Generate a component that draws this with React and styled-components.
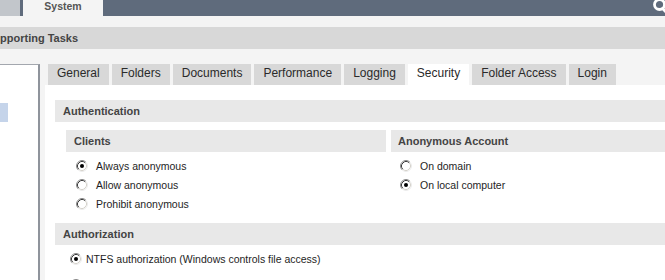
import React from "react";
import styled, { createGlobalStyle } from "styled-components";

const GlobalStyle = createGlobalStyle`
  html, body {
    margin: 0;
    padding: 0;
    background: #f4f4f4;
    overflow: hidden;
    font-family: "Liberation Sans", Arial, sans-serif;
  }
  #root {
    width: 665px;
    height: 280px;
    overflow: hidden;
  }
`;

const Page = styled.div`
  width: 665px;
  height: 280px;
  overflow: hidden;
  display: flex;
  flex-direction: column;
  background: #f4f4f4;
`;

const TopBar = styled.div`
  height: 16px;
  flex: none;
  display: flex;
  background: #5f6b7c;
  overflow: hidden;
`;

const TopStub = styled.div`
  width: 20px;
  background: #c2c6cb;
`;

const TopTab = styled.div`
  width: 80px;
  margin-left: 3px;
  background: #f4f4f4;
  color: #555;
  font-size: 10.5px;
  font-weight: bold;
  line-height: 12px;
  text-align: center;
`;

const TopIcon = styled.svg`
  margin-left: auto;
  flex: none;
  display: block;
`;

const TitleBar = styled.div`
  margin-top: 11px;
  height: 22px;
  flex: none;
  background: #d8d8d8;
  color: #444;
  font-size: 11px;
  font-weight: bold;
  line-height: 22px;
  white-space: nowrap;
  text-indent: -14px;
`;

const Body = styled.div`
  margin-top: 15px;
  flex: 1;
  display: flex;
  min-height: 0;
`;

const SidePanel = styled.div`
  width: 38px;
  flex: none;
  background: #fff;
  border-top: 1px solid #a3a7ae;
  border-right: 2px solid #8f949c;
  padding-top: 38px;
`;

const SideSelected = styled.div`
  width: 8px;
  height: 19px;
  background: #c5d4ea;
`;

const Main = styled.div`
  margin-left: 5px;
  flex: 1;
  display: flex;
  flex-direction: column;
  min-width: 0;
`;

const TabRow = styled.div`
  display: flex;
  gap: 3px;
  padding-left: 3px;
  height: 21px;
  flex: none;
`;

const Tab = styled.div`
  height: 21px;
  box-sizing: border-box;
  padding: 2px 9px 0;
  line-height: 15px;
  font-size: 12px;
  color: #2a2a2a;
  background: ${(p) => (p.$active ? "#ffffff" : "#d8d8d8")};
  white-space: nowrap;
`;

const Content = styled.div`
  flex: 1;
  background: #fff;
  padding: 15px 0 0 10px;
`;

const SectionBar = styled.div`
  height: 22px;
  background: #e8e8e8;
  color: #444;
  font-size: 11px;
  font-weight: bold;
  line-height: 22px;
  padding-left: 8px;
  margin-top: ${(p) => p.$top || 0}px;
`;

const Columns = styled.div`
  display: grid;
  grid-template-columns: 320px 1fr;
  gap: 5px;
  margin-top: 8px;
  margin-left: 11px;
`;

const SubHeader = styled.div`
  height: 22px;
  background: #e8e8e8;
  color: #444;
  font-size: 11px;
  font-weight: bold;
  line-height: 22px;
  padding-left: ${(p) => p.$pad || 8}px;
`;

const RadioList = styled.div`
  display: flex;
  flex-direction: column;
  padding-top: 5px;
  padding-left: ${(p) => p.$indent}px;
`;

const RadioRow = styled.div`
  height: ${(p) => p.$row}px;
  flex: none;
  display: flex;
  align-items: flex-start;
  gap: ${(p) => p.$gap}px;
`;

const RadioIcon = styled.svg`
  flex: none;
  margin-top: 3px;
`;

const RadioLabel = styled.span`
  font-size: 10.5px;
  color: #1e1e1e;
  line-height: 19px;
  white-space: nowrap;
`;

function Radio({ checked }) {
  return (
    <RadioIcon width="12" height="12" viewBox="0 0 12 12">
      <circle cx="6" cy="6" r="5.5" fill="#fff" />
      <path d="M2.11 9.89 A5.5 5.5 0 0 1 9.89 2.11" fill="none" stroke="#8a8a8a" strokeWidth="1" />
      <path d="M9.89 2.11 A5.5 5.5 0 0 1 2.11 9.89" fill="none" stroke="#ececec" strokeWidth="1" />
      <path d="M2.82 9.18 A4.5 4.5 0 0 1 9.18 2.82" fill="none" stroke="#3c3c3c" strokeWidth="1" />
      <path d="M9.18 2.82 A4.5 4.5 0 0 1 2.82 9.18" fill="none" stroke="#d6d3cc" strokeWidth="1" />
      {checked && <circle cx="6" cy="6" r="2" fill="#000" />}
    </RadioIcon>
  );
}

function RadioGroup({ items, indent, gap, row = 19 }) {
  return (
    <RadioList $indent={indent}>
      {items.map((it) => (
        <RadioRow key={it.label} $gap={gap} $row={row}>
          <Radio checked={it.checked} />
          <RadioLabel>{it.label}</RadioLabel>
        </RadioRow>
      ))}
    </RadioList>
  );
}

const tabs = [
  "General",
  "Folders",
  "Documents",
  "Performance",
  "Logging",
  "Security",
  "Folder Access",
  "Login",
];

export default function App() {
  return (
    <>
      <GlobalStyle />
      <Page>
        <TopBar>
          <TopStub />
          <TopTab>System</TopTab>
          <TopIcon width="15" height="16" viewBox="0 0 15 16">
            <circle cx="9.5" cy="4.5" r="5" fill="none" stroke="#fff" strokeWidth="2.8" />
            <path d="M12.5 8.5 L16 12" stroke="#fff" strokeWidth="2.8" strokeLinecap="round" />
          </TopIcon>
        </TopBar>
        <TitleBar>Supporting Tasks</TitleBar>
        <Body>
          <SidePanel>
            <SideSelected />
          </SidePanel>
          <Main>
            <TabRow>
              {tabs.map((t) => (
                <Tab key={t} $active={t === "Security"}>
                  {t}
                </Tab>
              ))}
            </TabRow>
            <Content>
              <SectionBar>Authentication</SectionBar>
              <Columns>
                <div>
                  <SubHeader $pad={8}>Clients</SubHeader>
                  <RadioGroup
                    indent={10}
                    gap={8}
                    items={[
                      { label: "Always anonymous", checked: true },
                      { label: "Allow anonymous" },
                      { label: "Prohibit anonymous" },
                    ]}
                  />
                </div>
                <div>
                  <SubHeader $pad={7}>Anonymous Account</SubHeader>
                  <RadioGroup
                    indent={9}
                    gap={8}
                    items={[
                      { label: "On domain" },
                      { label: "On local computer", checked: true },
                    ]}
                  />
                </div>
              </Columns>
              <SectionBar $top={9}>Authorization</SectionBar>
              <RadioGroup
                indent={15}
                gap={4}
                row={26}
                items={[
                  { label: "NTFS authorization (Windows controls file access)", checked: true },
                  { label: "Application authorization" },
                ]}
              />
            </Content>
          </Main>
        </Body>
      </Page>
    </>
  );
}
